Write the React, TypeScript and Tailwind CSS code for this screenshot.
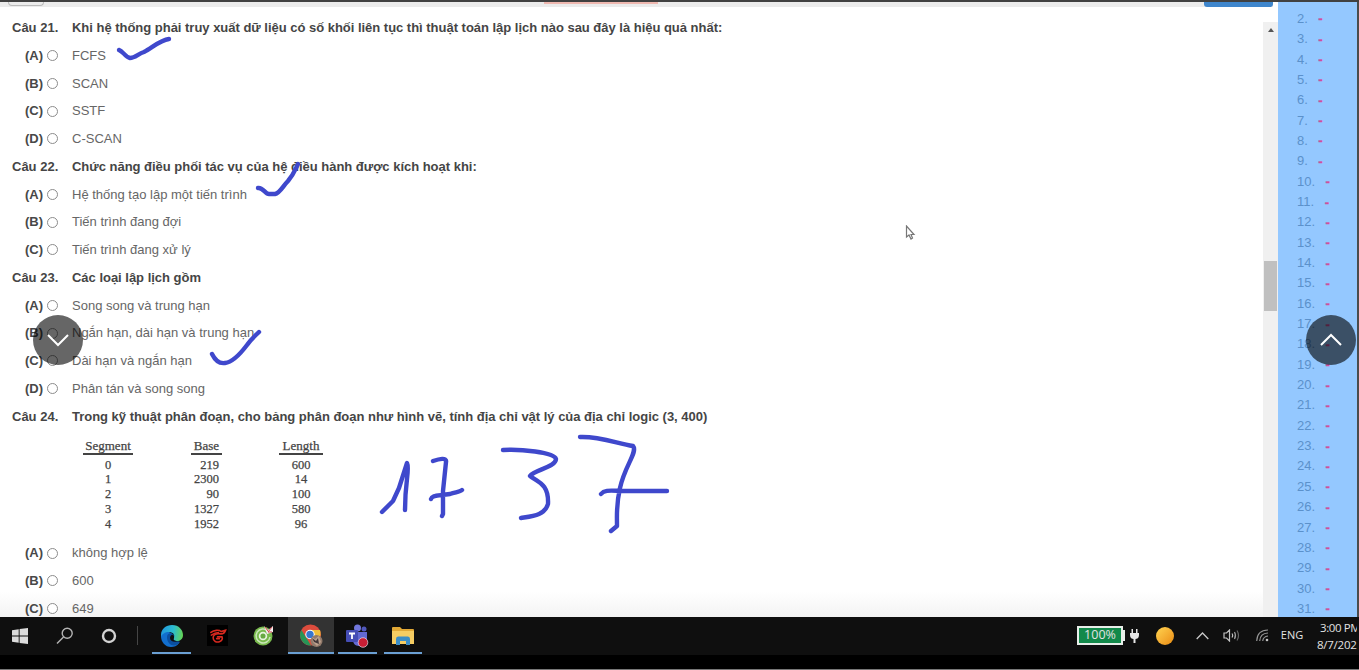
import React from "react";

type Option = [letter: string, text: string];

function Radio() {
  return <span className="h-[11px] w-[11px] shrink-0 rounded-full border border-[#8c8c8c] bg-white" />;
}

function Question({ no, text }: { no: number; text: string }) {
  return (
    <div className="flex h-[27.75px] items-center pl-3 font-bold text-[#454545]">
      <span className="w-[60px] shrink-0">Câu {no}.</span>
      <span className="tracking-[-0.018px]">{text}</span>
    </div>
  );
}

function Options({ items }: { items: Option[] }) {
  return (
    <>
      {items.map(([letter, text]) => (
        <div key={letter} className="flex h-[27.75px] items-center pl-[25px] text-[#666]">
          <span className="w-[22px] shrink-0 font-bold text-[#484848]">({letter})</span>
          <Radio />
          <span className="ml-[14px]">{text}</span>
        </div>
      ))}
    </>
  );
}

function Column({ title, values, className, inner }: { title: string; values: string[]; className: string; inner: string }) {
  return (
    <div className={"flex flex-col items-center " + className}>
      <div className="h-[17px] w-full border-b-2 border-[#444] text-center text-[13px] leading-[15px]">{title}</div>
      <div className={"mt-[3px] flex flex-col text-[12.5px] leading-[14.7px] " + inner}>
        {values.map((v) => (
          <span key={v}>{v}</span>
        ))}
      </div>
    </div>
  );
}

function SegmentTable() {
  return (
    <div className="flex h-[109px] items-start pl-[83px] pt-[7.5px] font-['Liberation_Serif',serif] text-[#444] [-webkit-text-stroke:0.25px_#444]">
      <Column title="Segment" values={["0", "1", "2", "3", "4"]} className="w-[50px]" inner="items-center" />
      <Column title="Base" values={["219", "2300", "90", "1327", "1952"]} className="ml-[58px] w-[31px]" inner="items-end" />
      <Column title="Length" values={["600", "14", "100", "580", "96"]} className="ml-[57px] w-[44px]" inner="items-center" />
    </div>
  );
}

const numbers = Array.from({ length: 30 }, (_, i) => i + 2);

function AnswerList() {
  return (
    <div className="w-[79px] shrink-0 bg-[#94c8ff] pl-[19px] pt-[6.5px] text-[13px]">
      {numbers.map((n) => (
        <div key={n} className="flex h-[20.35px] items-center gap-[10.5px] text-[#5b91cb]">
          <span>{n}.</span>
          <span className="mt-[1px] font-bold text-[#cf4f9b] [-webkit-text-stroke:0.3px_#cf4f9b]">-</span>
        </div>
      ))}
    </div>
  );
}

function Ink() {
  return (
    <svg
      className="pointer-events-none absolute left-0 top-0"
      width="1359"
      height="617"
      fill="none"
      stroke="#3f48cc"
      strokeWidth="4.4"
      strokeLinecap="round"
      strokeLinejoin="round"
    >
      <path d="M119 50C123 51 125 57 130 58C135 58 138 54 144 52C152 48 160 40 169 39" />
      <path d="M258 188C263 187 265 194 269 194H275C280 193 283 186 288 181C294 174 295 170 298 164" />
      <path d="M212 354C215 360 219 364 225 363C233 362 241 353 247 345C251 339 254 337 259 332" />
      <path d="M382 512L393 501L399 488L407 463C410 469 405 480 405 510" />
      <path d="M433 461C439 459 447 457 446 462L443 491V514L442 516M431 499C432 495 437 496 450 494C456 492 460 492 462 490" />
      <path d="M503 450C520 449 554 452 556 459C556 467 534 470 530 476C538 482 549 484 548 504C545 515 533 516 521 518" />
      <path d="M580 437C598 436 616 443 633 446C638 452 625 465 620 488C616 505 617 514 617 526L611 531M601 494C605 489 612 491 626 491H667" />
    </svg>
  );
}

function RoundButton({ up, className }: { up?: boolean; className: string }) {
  return (
    <button className={"absolute flex h-[50px] w-[50px] items-center justify-center rounded-full bg-black/60 " + className}>
      <svg width="22" height="14" fill="none" stroke="white" strokeWidth="2">
        <path d={up ? "M1 12L11 2L21 12" : "M1 2L11 12L21 2"} />
      </svg>
    </button>
  );
}

function AppSlot({ children, className = "", active }: { children?: React.ReactNode; className?: string; active?: boolean }) {
  return (
    <div className={"flex h-[37px] shrink-0 items-center justify-center pt-[2px] " + (active ? "border-b-2 border-[#6a9fd3] " : "pb-[2px] ") + className}>
      {children}
    </div>
  );
}

function Taskbar() {
  return (
    <div className="flex h-[53px] w-full shrink-0 flex-col border-b border-[#777] bg-black">
      <div className="flex h-[38px] w-full items-start bg-[#0f0f0f] font-['Open_Sans',sans-serif] text-[#e2e2e2]">
        <AppSlot className="ml-[12px] w-4">
          <svg width="16" height="16" fill="#dcdcdc">
            <path d="M0 2.2L6.7 1.2V7.5H0ZM7.6 1L16 0V7.5H7.6ZM0 8.4H6.7V14.8L0 13.8ZM7.6 8.4H16V16L7.6 14.9Z" />
          </svg>
        </AppSlot>
        <AppSlot className="ml-[28px] w-[18px]">
          <svg width="18" height="18" fill="none" stroke="#b4b4b4" strokeWidth="1.4">
            <circle cx="11.2" cy="6.3" r="5" />
            <path d="M7.5 10L1 16.5" />
          </svg>
        </AppSlot>
        <AppSlot className="ml-[27px] w-4">
          <svg width="16" height="16" fill="none" stroke="#d2d2d2" strokeWidth="2.4">
            <circle cx="8" cy="8" r="6" />
          </svg>
        </AppSlot>
        <AppSlot className="ml-[20px] w-px">
          <span className="h-[19px] w-px bg-[#454545]" />
        </AppSlot>
        <AppSlot active className="ml-[14px] w-[39px]">
          <svg width="24" height="24" viewBox="0 0 24 24">
            <defs>
              <linearGradient id="edgeTop" x1="0" y1=".4" x2="1" y2=".5">
                <stop stopColor="#2098df" />
                <stop offset=".55" stopColor="#2cbccf" />
                <stop offset="1" stopColor="#64d454" />
              </linearGradient>
            </defs>
            <path d="M1 12C2 8 6 7 9 8L14 11L19 19C17 22 14 23 11 23C5 23 1 18 1 12Z" fill="#126fce" />
            <path d="M7 13C7 10 10 8 13 10L15 16L20 18C16 24 7 22 7 13Z" fill="#0a4fa0" />
            <path d="M1 11C1 5 6 1 12 1C19 1 23 6 23 11C23 15 20 17 17 17C14 17 13 15.500 14 14C15 12 14 8 9 8C5 8 2 10 1 13Z" fill="url(#edgeTop)" />
            <path d="M14 12C13 9.500 10 11 10 14C10 17 14 19 19 17C15 17.500 12.500 16 14 14Z" fill="#0f0f0f" />
          </svg>
        </AppSlot>
        <AppSlot className="ml-[16px] w-[21px]">
          <span className="flex h-[21px] w-[21px] items-center justify-center bg-black">
            <svg width="18" height="16" viewBox="0 0 19 18" fill="none" stroke="#d8291f" strokeWidth="1.800" strokeLinecap="round">
              <path d="M1.500 5C5 2 11 2 13 4L18 2.500C17 6 14 7 11 6.500C7 6 4 8 4 11C4 15 8 16.500 11 15.500C14 14.500 15 12 14 10H9" />
              <path d="M2 8C5 6 7 5 10 5M8 12H11" />
            </svg>
          </span>
        </AppSlot>
        <AppSlot className="ml-[25px] w-[21px]">
          <svg width="21" height="21" viewBox="0 0 21 21">
            <circle cx="10" cy="11" r="9.500" fill="#78b94c" />
            <path d="M15 6A7 7 0 1 0 17 12" fill="none" stroke="#c9e6b8" strokeWidth="1.500" />
            <circle cx="10" cy="11" r="3.400" fill="#67a943" stroke="#e8f3df" strokeWidth="1.700" />
            <path d="M11 1L15 5L20 1V7L14 9Z" fill="#f4eeee" />
            <path d="M12 2L15 6M19 2L15 7H19" fill="none" stroke="#cf424b" />
          </svg>
        </AppSlot>
        <AppSlot active className="ml-[13.500px] w-[46px] bg-[#333]">
          <svg width="24" height="24" viewBox="0 0 24 24">
            <circle cx="11.500" cy="11" r="10.500" fill="#dd4c3d" />
            <path d="M2.400 6L8 15L12 21.500A10.500 10.500 0 0 1 2.400 6Z" fill="#279557" />
            <path d="M11 6H21C23 12 20 18 13 21L15 12Z" fill="#efbd3a" />
            <circle cx="11" cy="10.500" r="4.700" fill="white" />
            <circle cx="11" cy="10.500" r="3.700" fill="#3876ce" />
            <circle cx="17.500" cy="17" r="6" fill="#927a6b" />
            <path d="M13 13L16 15L20 12L22 18L18 22L14 18Z" fill="#bda28e" />
            <path d="M13 14L17 17L19 14L20 20L15 18Z" fill="#44383a" />
          </svg>
        </AppSlot>
        <AppSlot active className="ml-[4px] w-[39px]">
          <svg width="24" height="24" viewBox="0 0 24 24">
            <circle cx="12.500" cy="4" r="3.500" fill="#7278dd" />
            <circle cx="19" cy="5" r="2.500" fill="#5158bd" />
            <path d="M8 8H22V16C22 21 18 23 14 22C10 22 8 19 8 16Z" fill="#6269d2" />
            <rect x="1" y="6" width="12" height="12" rx="1" fill="#454db5" />
            <path d="M4 9.500H10M7 9.500V15" stroke="white" strokeWidth="1.800" />
            <circle cx="18" cy="18.500" r="4.800" fill="#c91f35" stroke="#e8dbe6" strokeWidth=".7" />
          </svg>
        </AppSlot>
        <AppSlot active className="ml-[7px] w-[38px]">
          <svg width="22" height="20" viewBox="0 0 22 20">
            <path d="M0 2Q0 1 1 1H8L10 3H21Q22 3 22 4V18H0Z" fill="#e2a936" />
            <path d="M0 5H22V18H0Z" fill="#f6cd63" />
            <path d="M4 19V13Q4 10.500 6 10.500H16Q18 10.500 18 13V19H14V15H8V19Z" fill="#3c8ec7" />
          </svg>
        </AppSlot>
        <div className="flex-1" />
        <AppSlot className="w-[48px]">
          <span className="flex h-[19px] w-[46px] items-center justify-center border-2 border-[#e8eee9] bg-[#12894a] text-[12.500px] leading-none">100%</span>
          <span className="h-[11px] w-[2px] bg-[#e8eee9]" />
        </AppSlot>
        <AppSlot className="ml-[5px] w-[9px]">
          <svg width="9" height="14" fill="#e6e6e6">
            <path d="M1.500 0H3V4H6V0H7.500V4H9V6C9 9 7 10 5.500 10V14H3.500V10C2 10 0 9 0 6V4H1.500Z" />
          </svg>
        </AppSlot>
        <AppSlot className="ml-[17px] w-[18px]">
          <span className="h-[18px] w-[18px] rounded-full bg-gradient-to-br from-[#ffd44f] to-[#e98b0b]" />
        </AppSlot>
        <AppSlot className="ml-[22px] w-[13px]">
          <svg width="13" height="8" fill="none" stroke="#c9c9c9" strokeWidth="1.300">
            <path d="M.7 7L6.500 1L12.300 7" />
          </svg>
        </AppSlot>
        <AppSlot className="ml-[14px] w-[17px]">
          <svg width="17" height="13" fill="none" stroke="#c2c2c2" strokeWidth="1.200">
            <path d="M1 4H3.500L6.500 1V12L3.500 9H1ZM9 4.500Q10.300 6.500 9 8.500" />
            <path d="M11.500 3Q13.500 6.500 11.500 10" stroke="#a0a0a0" />
            <path d="M14 1.500Q17 6.500 14 11.500" stroke="#666" />
          </svg>
        </AppSlot>
        <AppSlot className="ml-[16px] w-[13px]">
          <svg width="13" height="13" fill="none" stroke="#969696" strokeWidth="1.200">
            <path d="M.7 12C1 5 5 1 12 1M3.700 12C4 7 7 4.200 12 4M6.700 12C7 9.500 9 7.300 12 7" />
            <circle cx="11" cy="11" r="1.300" fill="#c4c4c4" stroke="none" />
          </svg>
        </AppSlot>
        <AppSlot className="ml-[12px] w-[22px] text-[11px]">ENG</AppSlot>
        <div className="ml-[14px] flex h-[38px] w-[40px] flex-col items-end overflow-hidden whitespace-nowrap pt-[2px] text-[11.500px] leading-[17px]">
          <span className="w-[37px] tracking-[-0.400px]">3:00 PM</span>
          <span className="w-[40px] tracking-[-0.250px]">8/7/2021</span>
        </div>
        <div className="w-[2px] shrink-0" />
      </div>
    </div>
  );
}

export default function App() {
  return (
    <div className="relative flex h-[670px] w-[1359px] flex-col overflow-hidden bg-[#f3f3f3] font-['Liberation_Sans',sans-serif] text-[13px]">
      <div className="h-[2px] shrink-0 bg-[#414141]" />
      <div className="flex h-[615px] shrink-0 overflow-hidden border-r-2 border-[#4b4b4b] bg-white">
        <main className="flex min-w-0 flex-1 flex-col whitespace-nowrap">
          <div className="flex h-[5px] shrink-0 bg-[#ececec]">
            <div className="ml-[8px] h-[4px] w-[36px] rounded-b-sm border border-t-0 border-[#bbb]" />
            <div className="ml-[500px] h-[2px] w-[114px] bg-[#efb9b1]" />
            <div className="ml-[546px] h-[5px] w-[69px] rounded-b-[3px] bg-[#3f86cc]" />
            <div className="flex-1 bg-white" />
          </div>
          <div className="flex min-h-0 flex-1">
            <div className="min-w-0 flex-1 overflow-hidden bg-[linear-gradient(to_bottom,#fff_585px,#f3f3f3_610px)] pt-[7px]">
              <Question no={21} text="Khi hệ thống phải truy xuất dữ liệu có số khối liên tục thì thuật toán lập lịch nào sau đây là hiệu quả nhất:" />
              <Options items={[["A", "FCFS"], ["B", "SCAN"], ["C", "SSTF"], ["D", "C-SCAN"]]} />
              <Question no={22} text="Chức năng điều phối tác vụ của hệ điều hành được kích hoạt khi:" />
              <Options items={[["A", "Hệ thống tạo lập một tiến trình"], ["B", "Tiến trình đang đợi"], ["C", "Tiến trình đang xử lý"]]} />
              <Question no={23} text="Các loại lập lịch gồm" />
              <Options items={[["A", "Song song và trung hạn"], ["B", "Ngắn hạn, dài hạn và trung hạn"], ["C", "Dài hạn và ngắn hạn"], ["D", "Phân tán và song song"]]} />
              <Question no={24} text="Trong kỹ thuật phân đoạn, cho bảng phân đoạn như hình vẽ, tính địa chỉ vật lý của địa chỉ logic (3, 400)" />
              <SegmentTable />
              <Options items={[["A", "không hợp lệ"], ["B", "600"], ["C", "649"]]} />
            </div>
            <div className="mt-[15px] flex w-[15px] shrink-0 flex-col items-center bg-[#f0f0f0] pt-[6px]">
              <svg width="6" height="4" fill="#555">
                <path d="M0 4L3 0L6 4Z" />
              </svg>
              <div className="mt-[229px] h-[50px] w-[13px] bg-[#c0c0c0]" />
            </div>
          </div>
        </main>
        <AnswerList />
      </div>
      <Taskbar />
      <Ink />
      <svg className="absolute left-[905px] top-[225px]" width="11" height="15" fill="white" stroke="#777" strokeWidth="1.200">
        <path d="M1.500 1V12L4 10L6 14L7.500 13L6 9.500H9Z" />
      </svg>
      <RoundButton className="left-[33px] top-[315px]" />
      <RoundButton up className="left-[1306px] top-[315px]" />
    </div>
  );
}
